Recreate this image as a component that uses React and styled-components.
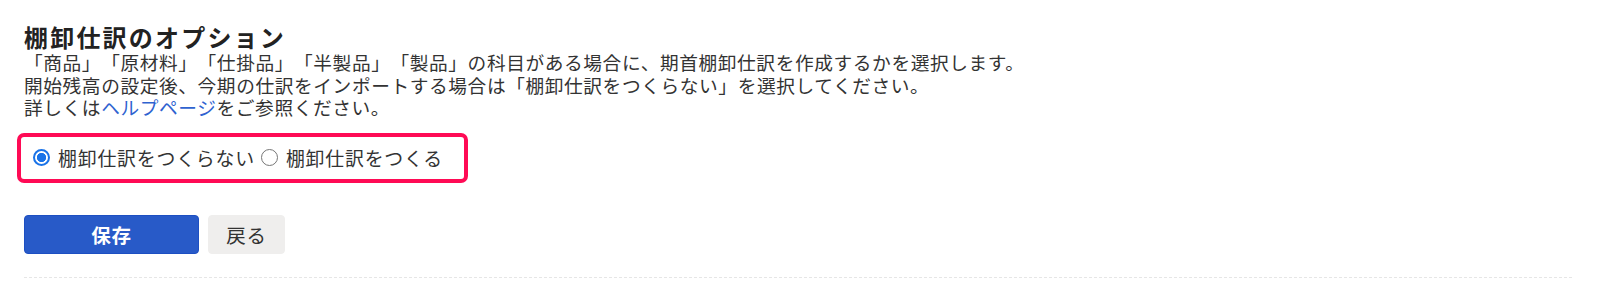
import React, { useState } from 'react';
import styled, { createGlobalStyle } from 'styled-components';

const GlobalStyle = createGlobalStyle`
  html, body {
    margin: 0;
    padding: 0;
    background: #fff;
  }
  body {
    font-family: "Noto Sans CJK JP", "Noto Sans", sans-serif;
    color: #333;
    text-spacing-trim: space-all;
  }
`;

const Page = styled.section`
  padding: 23px 28px 0 24px;
`;

const Title = styled.h2`
  margin: 0;
  font-size: 24px;
  line-height: 28px;
  font-weight: 700;
  color: #222;
  letter-spacing: 2.2px;
`;

const Desc = styled.div`
  font-size: 18.7px;
  line-height: 22.5px;
  letter-spacing: 0.6px;
  color: #333;

  p {
    margin: 0;
    white-space: nowrap;
  }

  a {
    color: #2f63d0;
    text-decoration: none;
  }
`;

const RadioGroup = styled.div`
  display: inline-flex;
  align-items: center;
  gap: 6px;
  margin: 14px 0 0 -7px;
  padding: 0 21px 0 12px;
  height: 42px;
  border: 4px solid #ff0a55;
  border-radius: 7px;
`;

const RadioLabel = styled.label`
  display: inline-flex;
  align-items: center;
  gap: 8px;
  font-size: 18.9px;
  line-height: 22px;
  letter-spacing: 0.8px;
  color: #333;
  cursor: pointer;
`;

const RadioInput = styled.input.attrs({ type: 'radio' })`
  appearance: none;
  margin: 0;
  width: 17px;
  height: 17px;
  border-radius: 50%;
  border: 1.5px solid #767676;
  background: #fff;
  flex-shrink: 0;

  &:checked {
    border: 2px solid #1a73e8;
    background: radial-gradient(circle, #1a73e8 0 4.3px, #fff 5px);
  }
`;

const Actions = styled.div`
  display: flex;
  gap: 9px;
  margin-top: 32px;
`;

const Button = styled.button`
  height: 39px;
  width: ${({ $width }) => $width}px;
  padding: 0;
  border-radius: 4px;
  font-family: inherit;
  font-size: 19.5px;
  letter-spacing: 0.8px;
  cursor: pointer;
  border: 1px solid ${({ $primary }) => ($primary ? '#1d4fc2' : '#efeeed')};
  background: ${({ $primary }) => ($primary ? '#285ac8' : '#efeeed')};
  color: ${({ $primary }) => ($primary ? '#fff' : '#333')};
  font-weight: ${({ $primary }) => ($primary ? 700 : 400)};
`;

const Divider = styled.hr`
  margin: 23px 0 0;
  border: 0;
  border-top: 1px dashed #e6e6e6;
`;

const options = [
  { value: 'none', label: '棚卸仕訳をつくらない' },
  { value: 'create', label: '棚卸仕訳をつくる' },
];

export default function App() {
  const [choice, setChoice] = useState('none');

  return (
    <>
      <GlobalStyle />
      <Page>
        <Title>棚卸仕訳のオプション</Title>
        <Desc>
          <p>「商品」「原材料」「仕掛品」「半製品」「製品」の科目がある場合に、期首棚卸仕訳を作成するかを選択します。</p>
          <p>開始残高の設定後、今期の仕訳をインポートする場合は「棚卸仕訳をつくらない」を選択してください。</p>
          <p>
            詳しくは<a href="#help">ヘルプページ</a>をご参照ください。
          </p>
        </Desc>

        <RadioGroup>
          {options.map((o) => (
            <RadioLabel key={o.value}>
              <RadioInput
                name="inventory"
                value={o.value}
                checked={choice === o.value}
                onChange={() => setChoice(o.value)}
              />
              {o.label}
            </RadioLabel>
          ))}
        </RadioGroup>

        <Actions>
          <Button $primary $width={175}>保存</Button>
          <Button $width={77}>戻る</Button>
        </Actions>

        <Divider />
      </Page>
    </>
  );
}
